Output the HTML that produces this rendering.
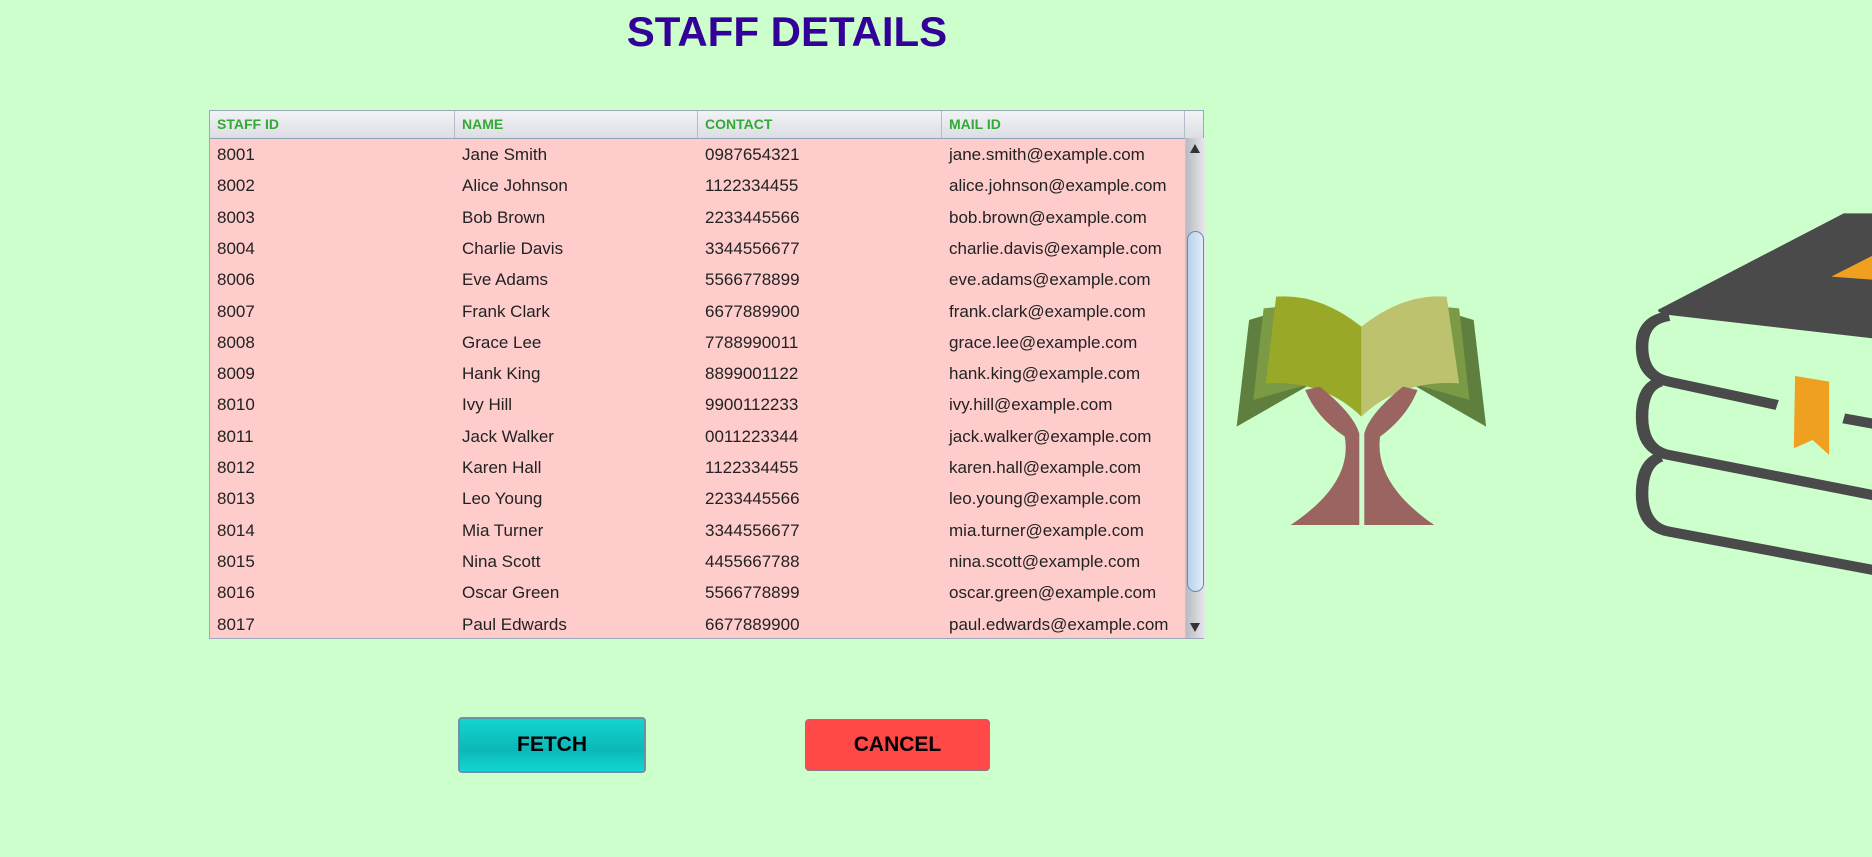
<!DOCTYPE html>
<html><head><meta charset="utf-8"><style>
body{margin:0;width:1872px;height:857px;background:#ccffcc;position:relative;overflow:hidden;font-family:"Liberation Sans",sans-serif}
.title{position:absolute;left:600px;width:374px;top:8px;text-align:center;font-weight:bold;font-size:42px;color:#330099;letter-spacing:0px}
.tbl{position:absolute;left:209px;top:110px;width:995px;height:529px;border:1px solid #9aa8b8;box-sizing:border-box;background:#ffcccc}
.hdr{position:absolute;left:0;top:0;right:0;height:27px;background:linear-gradient(#f2f3f6,#dcdee4);border-bottom:1px solid #8fa3b8}
.hdr div{position:absolute;top:0;height:27px;line-height:27px;padding-left:7px;font-size:14px;font-weight:bold;color:#33aa33;border-right:1px solid #b4bccb;box-sizing:border-box}
.row{position:absolute;left:0;height:31.3px;line-height:31.3px;font-size:17px;color:#222}
.row span{position:absolute;padding-left:7px;white-space:nowrap}
.sb{position:absolute;left:975px;top:27px;width:19px;bottom:0;background:linear-gradient(90deg,#b8bbc2,#e6e8ec);border-left:1px solid #c0c4cc}
.thumb{position:absolute;left:1px;right:1px;top:93px;height:359px;border:1px solid #6f88a8;border-radius:9px;background:linear-gradient(90deg,#b8d0ea,#e2eefa)}
.btn{position:absolute;text-align:center;font-weight:bold;font-size:21px;color:#000;box-sizing:border-box;border-radius:4px}
</style></head><body>
<div class="title">STAFF DETAILS</div>
<div class="tbl">
<div class="hdr">
<div style="left:0;width:245px">STAFF ID</div>
<div style="left:245px;width:243px">NAME</div>
<div style="left:488px;width:244px">CONTACT</div>
<div style="left:732px;width:243px">MAIL ID</div>
</div>
<div id="rows"></div>
<div class="sb">
<div style="position:absolute;left:4px;top:6px;width:0;height:0;border-left:5px solid transparent;border-right:5px solid transparent;border-bottom:9px solid #333"></div>
<div class="thumb"></div>
<div style="position:absolute;left:4px;bottom:6px;width:0;height:0;border-left:5px solid transparent;border-right:5px solid transparent;border-top:9px solid #333"></div>
</div>
</div>
<script>
var d=[["8001","Jane Smith","0987654321","jane.smith@example.com"],["8002","Alice Johnson","1122334455","alice.johnson@example.com"],["8003","Bob Brown","2233445566","bob.brown@example.com"],["8004","Charlie Davis","3344556677","charlie.davis@example.com"],["8006","Eve Adams","5566778899","eve.adams@example.com"],["8007","Frank Clark","6677889900","frank.clark@example.com"],["8008","Grace Lee","7788990011","grace.lee@example.com"],["8009","Hank King","8899001122","hank.king@example.com"],["8010","Ivy Hill","9900112233","ivy.hill@example.com"],["8011","Jack Walker","0011223344","jack.walker@example.com"],["8012","Karen Hall","1122334455","karen.hall@example.com"],["8013","Leo Young","2233445566","leo.young@example.com"],["8014","Mia Turner","3344556677","mia.turner@example.com"],["8015","Nina Scott","4455667788","nina.scott@example.com"],["8016","Oscar Green","5566778899","oscar.green@example.com"],["8017","Paul Edwards","6677889900","paul.edwards@example.com"]];
var h="",L=[0,245,488,732];
d.forEach(function(r,i){h+='<div class="row" style="top:'+(28+i*31.3)+'px">';r.forEach(function(c,j){h+='<span style="left:'+L[j]+'px">'+c+'</span>'});h+='</div>'});
document.getElementById("rows").innerHTML=h;
</script>
<div class="btn" style="left:458px;top:717px;width:188px;height:56px;line-height:52px;border:2px solid #6f90a8;background:linear-gradient(#14d4d0,#0bb8b8 60%,#12d6d4)">FETCH</div>
<div class="btn" style="left:805px;top:719px;width:185px;height:52px;line-height:50px;border:1px solid #8a7a88;background:#ff4848">CANCEL</div>
<svg style="position:absolute;left:1220px;top:200px" width="652" height="400" viewBox="0 0 1568 1200" preserveAspectRatio="none">
<polygon points="70,360 150,330 215,555 40,680" fill="#5f7f3e"/>
<polygon points="610,360 530,330 465,555 640,680" fill="#5f7f3e"/>
<polygon points="105,325 150,320 220,550 80,600" fill="#7a9a45"/>
<polygon points="575,325 530,320 460,550 600,600" fill="#7a9a45"/>
<path d="M135,290 Q240,280 340,380 L340,650 Q250,540 110,550 Z" fill="#99a826"/>
<path d="M340,380 Q440,280 545,290 L575,550 Q430,540 340,650 Z" fill="#bcc26e"/>
<path d="M205,570 Q230,650 300,710 Q320,850 170,975 L335,975 L335,700 Q320,640 240,560 Z" fill="#9a6560"/>
<path d="M475,570 Q450,650 385,710 Q370,850 515,975 L347,975 L347,700 Q360,640 440,560 Z" fill="#9a6560"/>
<path d="M1500,40 L1956,40 L1956,470 L1080,345 Q1040,335 1060,325 Z" fill="#4a4a4a"/>
<polygon points="1470,230 1580,160 1580,240" fill="#f0a020"/>
<g fill="none" stroke="#4a4a4a" stroke-width="30">
<path d="M1080,348 Q1015,360 1015,440 Q1015,530 1080,545 L1340,615"/>
<path d="M1500,655 L1956,760"/>
<path d="M1060,545 Q1015,560 1015,650 Q1015,750 1080,765 L1956,980"/>
<path d="M1060,770 Q1015,790 1015,880 Q1015,980 1080,995 L1956,1200"/>
</g>
<polygon points="1383,528 1465,545 1465,765 1425,720 1380,745" fill="#f0a020"/>
</svg>
</body></html>
